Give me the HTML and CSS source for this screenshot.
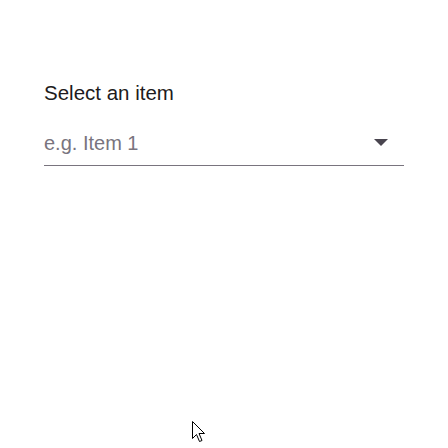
FILE: index.html
```html
<!DOCTYPE html>
<html>
<head>
<meta charset="utf-8">
<link rel="stylesheet" href="styles.css">
</head>
<body>
<div class="page">
  <div class="field">
    <label class="label">Select an item</label>
    <div class="select">
      <span class="placeholder">e.g. Item 1</span>
      <svg class="arrow" width="14" height="7" viewBox="0 0 14 7"><path d="M0 0 L14 0 L7 7 Z" fill="#49454f"/></svg>
    </div>
  </div>
</div>
<svg class="cursor" width="14" height="24" viewBox="0 0 14 24"><path d="M0.5 0.5 L0.5 17.5 L4.5 13.5 L7.5 20.5 L10 19.5 L7 12.5 L12.5 12.5 Z" fill="#fff" stroke="#000" stroke-width="1" stroke-linejoin="miter"/></svg>
</body>
</html>
```
FILE: styles.css
```css
html, body {
  margin: 0;
  padding: 0;
  background: #ffffff;
}
body {
  width: 448px;
  height: 448px;
  position: relative;
  overflow: hidden;
  font-family: "Liberation Sans", Arial, sans-serif;
}
.page {
  padding: 79px 0 0 44px;
}
.field {
  width: 360px;
  display: flex;
  flex-direction: column;
}
.label {
  font-size: 20.5px;
  line-height: 28px;
  color: #1d1b20;
}
.select {
  margin-top: 21px;
  display: flex;
  align-items: flex-start;
  justify-content: space-between;
  padding: 3px 0 10px 0;
  border-bottom: 1px solid #79747e;
}
.placeholder {
  font-size: 20px;
  line-height: 24px;
  color: #79747e;
}
.arrow {
  display: block;
  margin: 8px 16px 0 0;
}
.cursor {
  position: absolute;
  left: 192px;
  top: 421px;
}
```
